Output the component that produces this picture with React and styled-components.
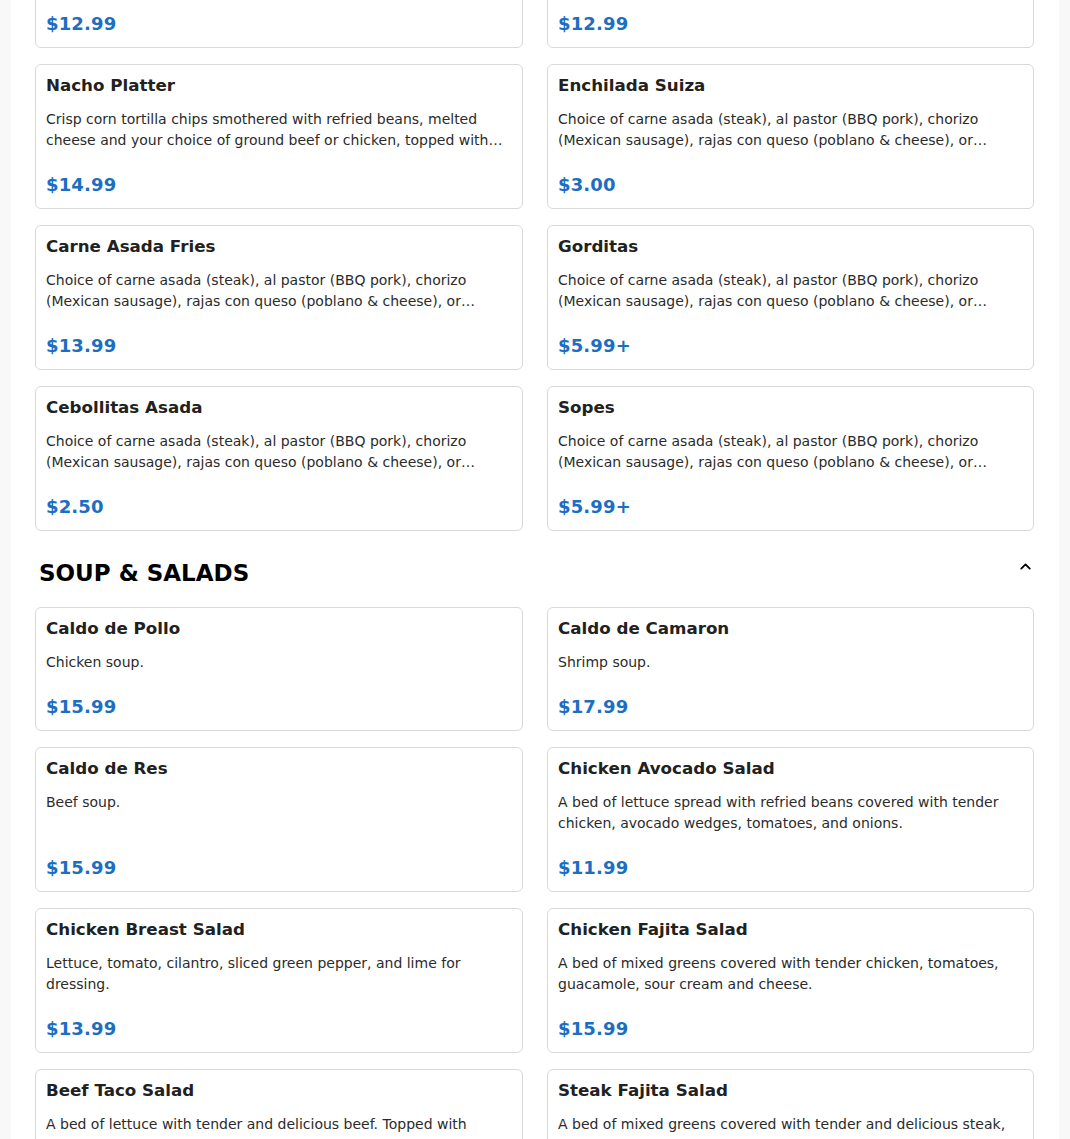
import React from 'react';
import styled, { createGlobalStyle } from 'styled-components';
import { ChevronUp } from 'lucide-react';

const fillings =
  'Choice of carne asada (steak), al pastor (BBQ pork), chorizo (Mexican sausage), rajas con queso (poblano & cheese), or carnitas (pulled pork). Served with rice and beans.';

const sections = [
  {
    title: 'Appetizers',
    hideHeader: true,
    items: [
      { name: 'Quesadilla', desc: 'Large flour tortilla filled with melted cheese and your choice of meat, served with guacamole and sour cream on the side.', price: '$12.99' },
      { name: 'Flautas', desc: 'Crispy rolled tortillas filled with shredded chicken or beef, topped with lettuce, sour cream and queso fresco.', price: '$12.99' },
      { name: 'Nacho Platter', desc: 'Crisp corn tortilla chips smothered with refried beans, melted cheese and your choice of ground beef or chicken, topped with lettuce, tomato, sour cream and guacamole.', price: '$14.99' },
      { name: 'Enchilada Suiza', desc: fillings, price: '$3.00' },
      { name: 'Carne Asada Fries', desc: fillings, price: '$13.99' },
      { name: 'Gorditas', desc: fillings, price: '$5.99+' },
      { name: 'Cebollitas Asada', desc: fillings, price: '$2.50' },
      { name: 'Sopes', desc: fillings, price: '$5.99+' },
    ],
  },
  {
    title: 'Soup & Salads',
    items: [
      { name: 'Caldo de Pollo', desc: 'Chicken soup.', price: '$15.99' },
      { name: 'Caldo de Camaron', desc: 'Shrimp soup.', price: '$17.99' },
      { name: 'Caldo de Res', desc: 'Beef soup.', price: '$15.99' },
      { name: 'Chicken Avocado Salad', desc: 'A bed of lettuce spread with refried beans covered with tender chicken, avocado wedges, tomatoes, and onions.', price: '$11.99' },
      { name: 'Chicken Breast Salad', desc: 'Lettuce, tomato, cilantro, sliced green pepper, and lime for dressing.', price: '$13.99' },
      { name: 'Chicken Fajita Salad', desc: 'A bed of mixed greens covered with tender chicken, tomatoes, guacamole, sour cream and cheese.', price: '$15.99' },
      { name: 'Beef Taco Salad', desc: 'A bed of lettuce with tender and delicious beef. Topped with tomatoes, onions, cheese, sour cream and guacamole in a crispy shell.', price: '$12.99' },
      { name: 'Steak Fajita Salad', desc: 'A bed of mixed greens covered with tender and delicious steak, tomatoes, guacamole, sour cream and cheese.', price: '$16.99' },
    ],
  },
];

const App = () => {
  return (
    <>
      <GlobalStyle />
      <Page>
        <Menu>
          {sections.map((section) => (
            <Section key={section.title}>
              {!section.hideHeader && (
                <SectionHeader>
                  <SectionTitle>{section.title}</SectionTitle>
                  <Toggle>
                    <ChevronUp size={17} strokeWidth={2.6} />
                  </Toggle>
                </SectionHeader>
              )}
              <Grid>
                {section.items.map((item) => (
                  <Card key={item.name}>
                    <ItemName>{item.name}</ItemName>
                    <ItemDesc>{item.desc}</ItemDesc>
                    <Price>{item.price}</Price>
                  </Card>
                ))}
              </Grid>
            </Section>
          ))}
        </Menu>
      </Page>
    </>
  );
};

const GlobalStyle = createGlobalStyle`
    body {
        margin: 0;
        background: #f8f8f9;
        font-family: "DejaVu Sans", "Liberation Sans", sans-serif;
        overflow: hidden;
    }
`;

const Page = styled.div`
    height: 1139px;
    overflow: hidden;
`;

const Menu = styled.main`
    max-width: 1048px;
    margin: -97px auto 0;
    padding: 0 24px 40px;
    box-sizing: border-box;
    background: #fff;
    min-height: 1400px;
`;

const Section = styled.section`
    margin-bottom: 29px;
`;

const SectionHeader = styled.div`
    display: flex;
    justify-content: space-between;
    align-items: flex-start;
    padding: 0 1px 0 4px;
    margin-bottom: 21px;
`;

const SectionTitle = styled.h2`
    margin: 0;
    font-size: 23px;
    line-height: 26px;
    font-weight: 700;
    text-transform: uppercase;
    color: #000;
`;

const Toggle = styled.button`
    display: flex;
    margin-top: -2px;
    border: none;
    background: none;
    padding: 0;
    color: #000;
    cursor: pointer;
`;

const Grid = styled.div`
    display: grid;
    grid-template-columns: 488px 487px;
    column-gap: 24px;
    row-gap: 16px;
`;

const Card = styled.div`
    display: flex;
    flex-direction: column;
    border: 1px solid #d9d9dc;
    border-radius: 6px;
    padding: 10px 10px 12px;
    background: #fff;
`;

const ItemName = styled.h3`
    margin: 0;
    font-size: 16.7px;
    line-height: 20px;
    font-weight: 700;
    color: #212121;
`;

const ItemDesc = styled.p`
    margin: 14px 0 0;
    font-size: 14px;
    line-height: 21px;
    color: #2b2b2b;
    display: -webkit-box;
    -webkit-line-clamp: 2;
    -webkit-box-orient: vertical;
    overflow: hidden;
`;

const Price = styled.div`
    margin-top: auto;
    padding-top: 23px;
    font-size: 18px;
    line-height: 22px;
    font-weight: 700;
    color: #1b6ec2;
    letter-spacing: 0.15px;
`;

export default App;
